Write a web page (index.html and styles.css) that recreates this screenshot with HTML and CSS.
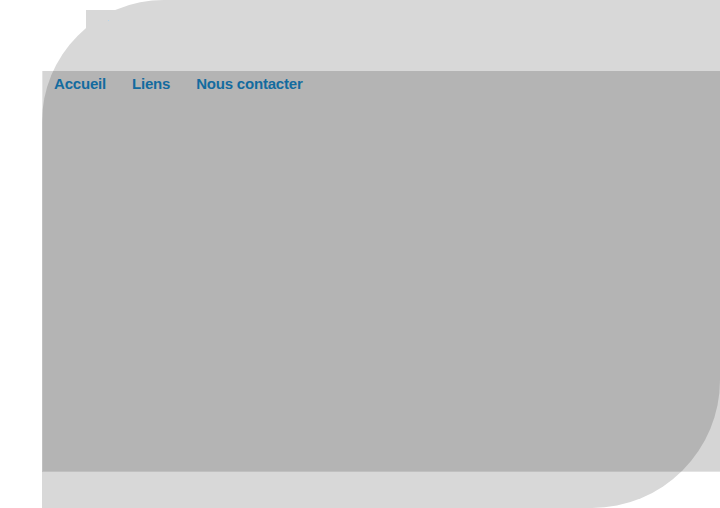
FILE: index.html
```html
<!DOCTYPE html>
<html lang="fr">
<head>
<meta charset="utf-8">
<title>Accueil</title>
<link rel="stylesheet" href="styles.css">
</head>
<body>
<div class="page">
  <div class="shape">
    <div class="tab"><span class="dot"></span></div>
  </div>
  <div class="panel">
    <nav class="menu">
      <a class="menu-link" href="#">Accueil</a>
      <a class="menu-link" href="#">Liens</a>
      <a class="menu-link" href="#">Nous contacter</a>
    </nav>
  </div>
</div>
</body>
</html>
```

FILE: styles.css
```css
html, body {
  margin: 0;
  padding: 0;
  background: #ffffff;
}

.page {
  display: grid;
  width: 720px;
  height: 508px;
  overflow: hidden;
  padding-left: 42px;
  box-sizing: border-box;
}

.shape {
  grid-area: 1 / 1;
  height: 508px;
  background: #d8d8d8;
  border-radius: 122px 0 128px 0;
  display: flex;
  align-items: flex-start;
}

.tab {
  margin-top: 10px;
  margin-left: 44px;
  width: 40px;
  height: 22px;
  background: #d8d8d8;
  display: flex;
  align-items: flex-start;
}

.dot {
  margin-top: 10px;
  margin-left: 22px;
  width: 1px;
  height: 1px;
  background: #b8d6ea;
}

.panel {
  grid-area: 1 / 1;
  margin-top: 71px;
  height: 401px;
  align-self: start;
  background: rgba(0, 0, 0, 0.165);
  background-clip: padding-box;
  border-left: 1px solid rgba(0, 0, 0, 0.11);
  border-bottom: 1px solid rgba(0, 0, 0, 0.11);
  box-sizing: border-box;
}

.menu {
  display: flex;
  gap: 26px;
  padding: 4px 0 0 11px;
}

.menu-link {
  font-family: "Liberation Sans", Arial, sans-serif;
  font-weight: bold;
  font-size: 15px;
  letter-spacing: -0.2px;
  line-height: 17px;
  color: #136b9f;
  text-decoration: none;
}
```
